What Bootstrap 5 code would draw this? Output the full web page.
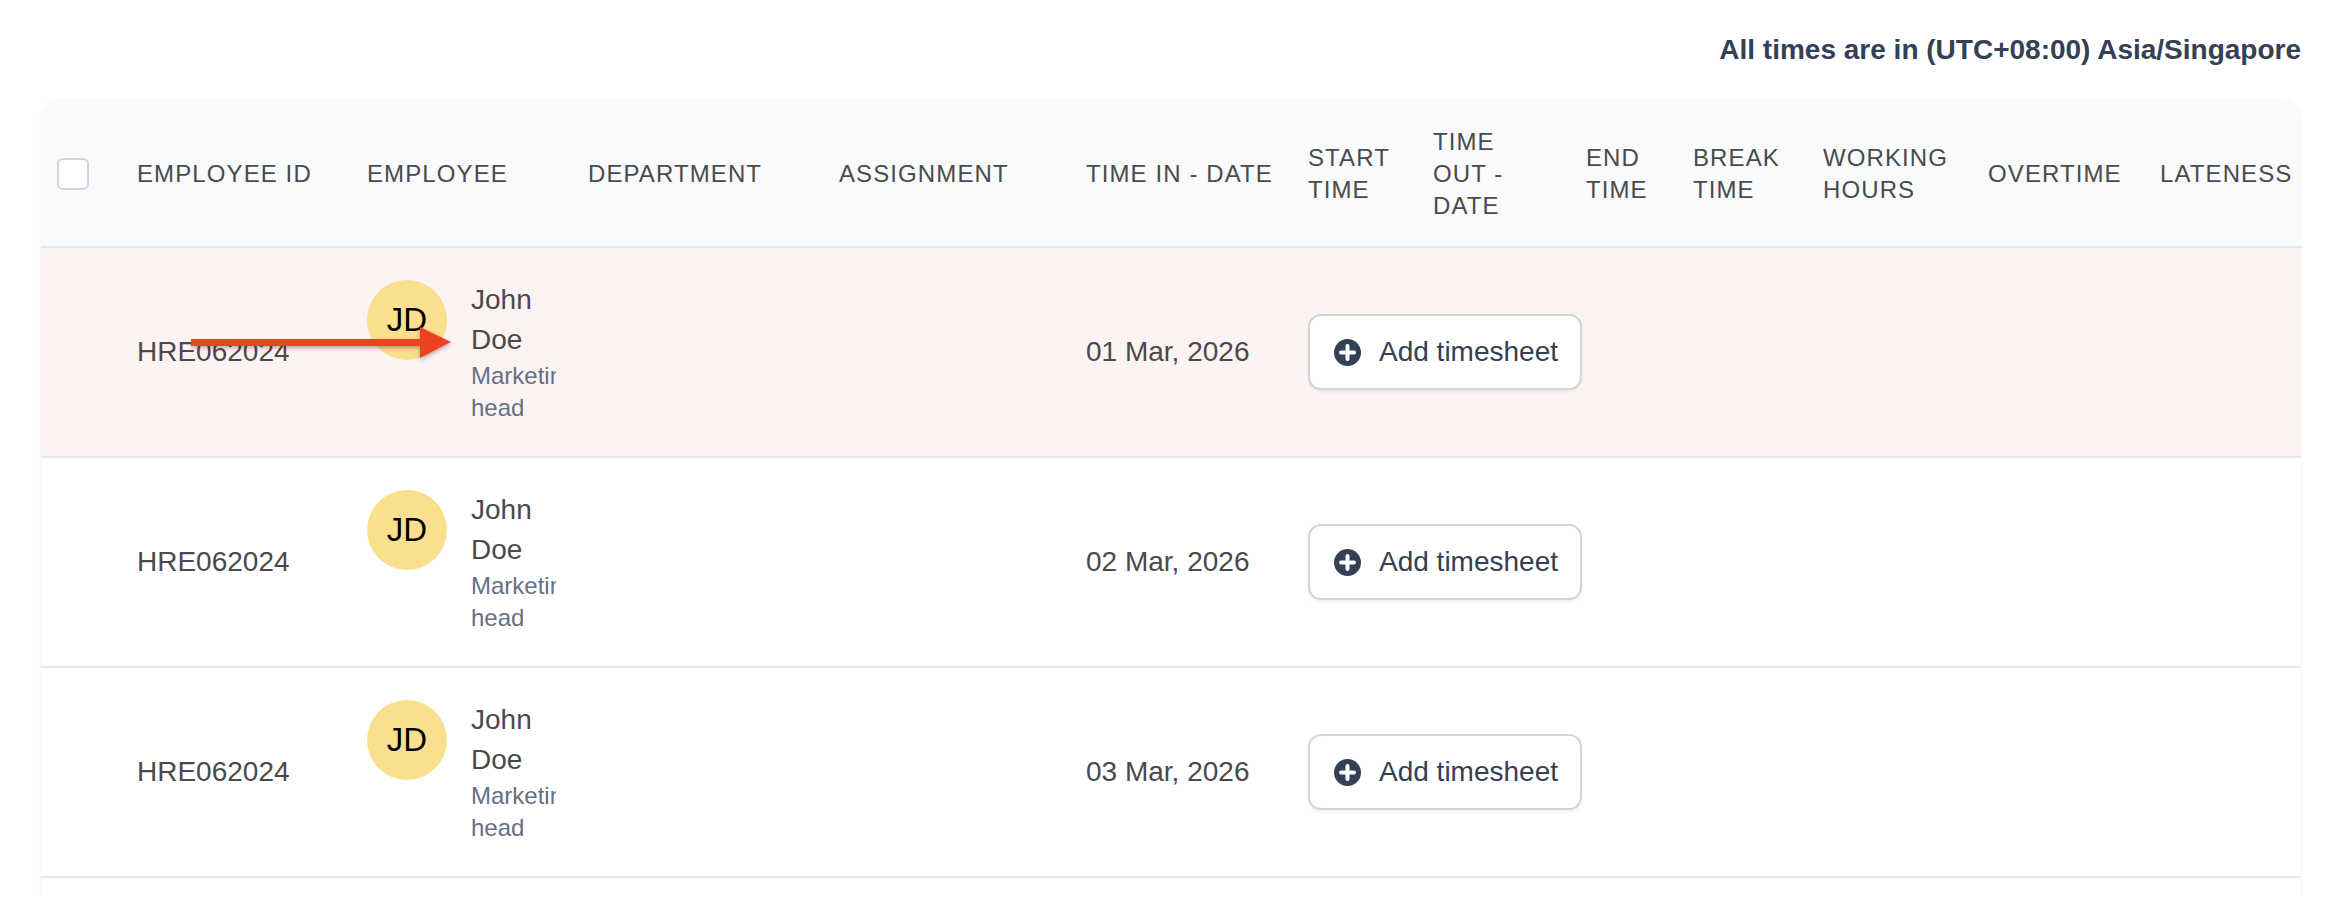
<!doctype html>
<html lang="en">
<head>
<meta charset="utf-8">
<title>Timesheets</title>
<link rel="stylesheet" href="https://cdn.jsdelivr.net/npm/bootstrap@5.3.0/dist/css/bootstrap.min.css">
<style>
html,body{height:100%;overflow:hidden;background:#fff}
body{font-family:"Liberation Sans",Arial,sans-serif;color:#4a4a4a}
.page-wrap{position:relative;height:898px;overflow:hidden;padding:32px 33px 0 41px}
.tz-note{font-size:28px;line-height:36px;font-weight:700;color:#344054;text-align:right;margin-bottom:32px}
.sheet-box{border-radius:20px 20px 0 0;box-shadow:0 0 3px rgba(16,24,40,.07);overflow:hidden}
.sheet-table{table-layout:fixed;width:2260px;margin:0;--bs-table-bg:transparent;border-collapse:separate;border-spacing:0;color:#4a4a4a}
.sheet-table thead th{background:#f9fafb;height:148px;padding:1px 16px 0;font-size:24px;line-height:32px;font-weight:400;letter-spacing:1.1px;text-transform:uppercase;vertical-align:middle;border-bottom:2px solid #e4e7ec;color:#4a4a4a}
.sheet-table tbody td{height:210px;padding:0 16px;font-size:28px;vertical-align:middle;border-bottom:2px solid #e4e7ec;color:#4a4a4a}
.sheet-table tbody tr.row-late td{background:#fdf3f2}
.sheet-table th.chk-cell{padding:2px 0 0 16px}
.chk-box{width:32px;height:32px;margin:0;border:2px solid #d0d5dd;border-radius:9px;display:block;float:none}
.person{display:flex;gap:24px;align-items:flex-start}
.avatar-ring{flex:0 0 80px;width:80px;height:80px;background:#fadf8f;color:#000;font-size:33px;display:flex;align-items:center;justify-content:center}
.person-text{width:86px;overflow:hidden}
.person-name{font-size:28px;line-height:40px}
.person-role{font-size:24px;line-height:32px;color:#667085}
.add-btn{--bs-btn-bg:#fff;width:274px;height:76px;border:2px solid #d0d5dd;border-radius:13px;background:#fff;color:#344054;font-size:28px;line-height:36px;padding:0 0 0 24px;gap:18px;box-shadow:0 2px 3px rgba(16,24,40,.06)}
.add-btn svg{flex:0 0 27px}
.arrow-over{position:absolute;left:180px;top:320px;pointer-events:none}
</style>
</head>
<body>
<div class="page-wrap">
  <div class="tz-note">All times are in (UTC+08:00) Asia/Singapore</div>
  <div class="sheet-box">
    <table class="table sheet-table">
      <colgroup>
        <col style="width:80px"><col style="width:230px"><col style="width:221px"><col style="width:251px"><col style="width:247px"><col style="width:222px"><col style="width:125px"><col style="width:153px"><col style="width:107px"><col style="width:130px"><col style="width:165px"><col style="width:172px"><col style="width:157px">
      </colgroup>
      <thead>
        <tr>
          <th class="chk-cell"><input class="form-check-input chk-box" type="checkbox" aria-label="Select all"></th>
          <th>Employee ID</th>
          <th>Employee</th>
          <th>Department</th>
          <th>Assignment</th>
          <th class="text-nowrap">Time in - Date</th>
          <th>Start time</th>
          <th>Time out - Date</th>
          <th>End time</th>
          <th>Break time</th>
          <th>Working hours</th>
          <th>Overtime</th>
          <th>Lateness</th>
        </tr>
      </thead>
      <tbody>
        <tr class="row-late">
          <td></td><td>HRE062024</td>
          <td><div class="person"><div class="avatar-ring rounded-circle">JD</div><div class="person-text"><div class="person-name">John Doe</div><div class="person-role">Marketing head</div></div></div></td>
          <td></td><td></td><td>01 Mar, 2026</td>
          <td colspan="7"><button type="button" class="btn add-btn d-inline-flex align-items-center"><svg width="27" height="27" viewBox="0 0 27 27"><circle cx="13.5" cy="13.5" r="13.5" fill="#344054"/><path d="M13.5 7v13M7 13.5h13" stroke="#fff" stroke-width="4" stroke-linecap="round"/></svg>Add timesheet</button></td>
        </tr>
        <tr>
          <td></td><td>HRE062024</td>
          <td><div class="person"><div class="avatar-ring rounded-circle">JD</div><div class="person-text"><div class="person-name">John Doe</div><div class="person-role">Marketing head</div></div></div></td>
          <td></td><td></td><td>02 Mar, 2026</td>
          <td colspan="7"><button type="button" class="btn add-btn d-inline-flex align-items-center"><svg width="27" height="27" viewBox="0 0 27 27"><circle cx="13.5" cy="13.5" r="13.5" fill="#344054"/><path d="M13.5 7v13M7 13.5h13" stroke="#fff" stroke-width="4" stroke-linecap="round"/></svg>Add timesheet</button></td>
        </tr>
        <tr>
          <td></td><td>HRE062024</td>
          <td><div class="person"><div class="avatar-ring rounded-circle">JD</div><div class="person-text"><div class="person-name">John Doe</div><div class="person-role">Marketing head</div></div></div></td>
          <td></td><td></td><td>03 Mar, 2026</td>
          <td colspan="7"><button type="button" class="btn add-btn d-inline-flex align-items-center"><svg width="27" height="27" viewBox="0 0 27 27"><circle cx="13.5" cy="13.5" r="13.5" fill="#344054"/><path d="M13.5 7v13M7 13.5h13" stroke="#fff" stroke-width="4" stroke-linecap="round"/></svg>Add timesheet</button></td>
        </tr>
        <tr>
          <td></td><td></td><td></td><td></td><td></td><td></td><td colspan="7"></td>
        </tr>
      </tbody>
    </table>
  </div>
  <svg class="arrow-over" width="290" height="50" viewBox="0 0 290 50" aria-hidden="true">
    <defs><filter id="arrowShade" x="-5%" y="-30%" width="110%" height="180%"><feDropShadow dx="0" dy="2" stdDeviation="2" flood-color="#000" flood-opacity=".3"/></filter></defs>
    <path d="M11 19h229V7l31 15-31 16V26H11z" fill="#ec4323" filter="url(#arrowShade)"/>
  </svg>
</div>
</body>
</html>
